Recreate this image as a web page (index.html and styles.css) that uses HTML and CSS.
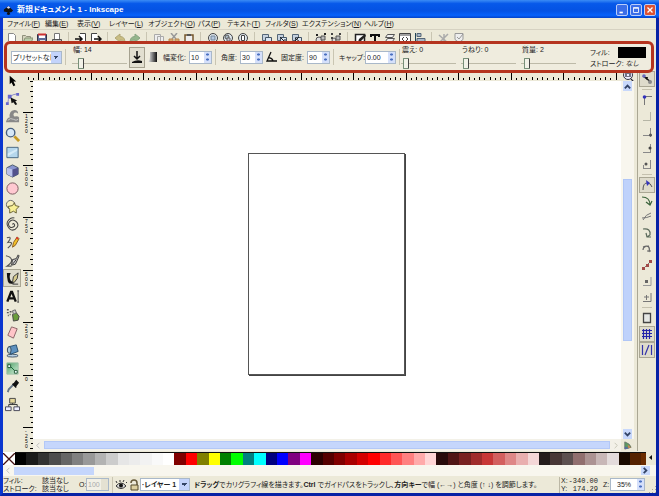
FILE: index.html
```html
<!DOCTYPE html>
<html lang="ja">
<head>
<meta charset="utf-8">
<title>新規ドキュメント 1 - Inkscape</title>
<link rel="stylesheet" href="styles.css">
</head>
<body>
<div class="window">
<header class="titlebar">
  <svg class="logo" viewBox="0 0 12 12"><path d="M6 1 11 6 9 8 7 8 8 10 6 11 4 10 5 8 1 7V5Z" fill="#111"/><path d="M6 1 8 3 6 4 4 3Z" fill="#dde"/></svg>
  <h1>新規ドキュメント 1 - Inkscape</h1>
  <div class="winbtns">
    <button aria-label="最小化"><svg viewBox="0 0 12 12"><path d="M3 9h4" stroke="#fff" stroke-width="2"/></svg></button>
    <button aria-label="最大化"><svg viewBox="0 0 12 12"><path d="M3 3h6v6H3zM3 4h6" fill="none" stroke="#fff"/></svg></button>
    <button class="close" aria-label="閉じる"><svg viewBox="0 0 12 12"><path d="M3 3l6 6M9 3l-6 6" stroke="#fff" stroke-width="1.6"/></svg></button>
  </div>
</header>
<nav class="menu">
  <a href="#">ファイル(<u>F</u>)</a><a href="#">編集(<u>E</u>)</a><a href="#">表示(<u>V</u>)</a><a href="#">レイヤー(<u>L</u>)</a><a href="#">オブジェクト(<u>O</u>)</a><a href="#">パス(<u>P</u>)</a><a href="#">テキスト(<u>T</u>)</a><a href="#">フィルタ(<u>S</u>)</a><a href="#">エクステンション(<u>N</u>)</a><a href="#">ヘルプ(<u>H</u>)</a>
</nav>
<div class="commands">
  <button aria-label="新規"><svg viewBox="0 0 12 12"><path d="M2.500 .5h5l2 2v9h-7z" fill="#fff" stroke="#888"/></svg></button>
  <button aria-label="開く"><svg viewBox="0 0 12 12"><path d="M1.500 10V2.500h3l1 1h4V10z" fill="#d5d3be" stroke="#8f907c"/><path d="M2 10l2-5h8l-2 5z" fill="#b9cba9" stroke="#899477"/></svg></button>
  <button aria-label="保存"><svg viewBox="0 0 12 12"><path d="M1.500 1.500h9v9h-9z" fill="#5d6c98" stroke="#334"/><path d="M3 2h6v3H3z" fill="#fff"/><path d="M2 1.500h8" stroke="#c33" stroke-width="2"/><path d="M4 7h5v4H4z" fill="#ddd"/></svg></button>
  <button aria-label="印刷"><svg viewBox="0 0 12 12"><path d="M3.500 6V.5h5V6" fill="#fff" stroke="#777"/><path d="M1.500 6.500h9v4h-9z" fill="#bbb" stroke="#555"/></svg></button>
  <i></i>
  <button aria-label="インポート"><svg viewBox="0 0 12 12"><path d="M5 .5h5.500v10H5" fill="#fff" stroke="#444"/><path d="M0 6h6M4 3l3 3-3 3" fill="none" stroke="#111" stroke-width="1.500"/></svg></button>
  <button aria-label="エクスポート"><svg viewBox="0 0 12 12"><path d="M7 .5H1.500v10H7" fill="#fff" stroke="#444"/><path d="M4 6h7M8 3l3 3-3 3" fill="none" stroke="#111" stroke-width="1.500"/></svg></button>
  <i></i>
  <button aria-label="元に戻す"><svg viewBox="0 0 12 12"><path d="M1 5l5-4v2.500q5 0 5 6-2-3-5-2.500V9z" fill="#c9bd83" stroke="#b1a775"/></svg></button>
  <button aria-label="やり直し"><svg viewBox="0 0 12 12"><path d="M11 5L6 1v2.500q-5 0-5 6 2-3 5-2.500V9z" fill="#94b68c" stroke="#89a583"/></svg></button>
  <i></i>
  <button aria-label="コピー"><svg viewBox="0 0 12 12"><path d="M1.500 1.500h6v8h-6zM4.500 3.500h6v8h-6z" fill="#eee" stroke="#aaa"/></svg></button>
  <button aria-label="切り取り"><svg viewBox="0 0 12 12"><path d="M3 0l5 6M9 0L4 6" stroke="#999" stroke-width="1.500"/><path d="M1 6h4v4H1zM7 6h4v4H7z" fill="#dba66a" stroke="#b58955"/></svg></button>
  <button aria-label="貼り付け"><svg viewBox="0 0 12 12"><path d="M2 2h8v10H2z" fill="#eee" stroke="#75572c" stroke-width="1.500"/><path d="M4 1h4v2H4z" fill="#555"/></svg></button>
  <i></i>
  <button aria-label="選択をズーム"><svg viewBox="0 0 12 12"><circle cx="6" cy="5" r="4.500" fill="#dfe8ee" stroke="#444"/><path d="M4 3h4v4H4z" fill="#b6c8df" stroke="#789"/><path d="M9 8l3 4" stroke="#444" stroke-width="2"/></svg></button>
  <button aria-label="描画をズーム"><svg viewBox="0 0 12 12"><circle cx="6" cy="5" r="4.500" fill="#dfe8ee" stroke="#444"/><circle cx="5" cy="4" r="2" fill="#a9b9c5" stroke="#555"/><path d="M5 5h3v3H5z" fill="#ccd" stroke="#666"/><path d="M9 8l3 4" stroke="#444" stroke-width="2"/></svg></button>
  <button aria-label="ページをズーム"><svg viewBox="0 0 12 12"><circle cx="6" cy="5" r="4.500" fill="#dfe8ee" stroke="#444"/><path d="M4.500 2.500h3v5h-3z" fill="#fff" stroke="#444"/><path d="M9 8l3 4" stroke="#444" stroke-width="2"/></svg></button>
  <i></i>
  <button aria-label="複製"><svg viewBox="0 0 12 12"><path d="M1.500 1.500h6v6h-6z" fill="#c6d2df" stroke="#567"/><path d="M4.500 4.500h6v6h-6z" fill="#d9e5f2" stroke="#456"/></svg></button>
  <button aria-label="クローン"><svg viewBox="0 0 12 12"><path d="M1.500 1.500h6v6h-6z" fill="#c6d2df" stroke="#567"/><path d="M4.500 4.500h6v6h-6z" fill="#d9e5f2" stroke="#456"/><path d="M4 4l5 5M9 6v3H6" fill="none" stroke="#222"/></svg></button>
  <button aria-label="クローン解除"><svg viewBox="0 0 12 12"><path d="M1.500 1.500h6v6h-6z" fill="#c6d2df" stroke="#567"/><path d="M4.500 4.500h6v6h-6z" fill="#d9e5f2" stroke="#456"/><path d="M4 8l4-4M4 5l5 4" stroke="#222"/></svg></button>
  <i></i>
  <button aria-label="グループ化"><svg viewBox="0 0 12 12"><circle cx="4" cy="7" r="3" fill="#ddd" stroke="#555"/><path d="M6 3h4v4H6z" fill="#bbb" stroke="#555"/><path d="M1 2h2M9 1h2M11 10h1" stroke="#222" stroke-width="2"/></svg></button>
  <button aria-label="グループ解除"><svg viewBox="0 0 12 12"><circle cx="4" cy="7" r="2" fill="#ddd" stroke="#555"/><path d="M6 3h4v4H6z" fill="#bbb" stroke="#555"/><path d="M1 1h2M9 1h2M1 5h2M10 9h2" stroke="#444" stroke-width="2"/></svg></button>
  <i></i>
  <button aria-label="フィル"><svg viewBox="0 0 12 12"><path d="M1.500 1.500h9v8h-9z" fill="#fff" stroke="#222" stroke-width="1.500"/><path d="M4 9l1-3 6-5 1 2-5 5z" fill="#222"/></svg></button>
  <button aria-label="テキスト"><svg viewBox="0 0 12 12"><path d="M2 4V2h8v2M6 2v8M4 10h4" fill="none" stroke="#111" stroke-width="2"/></svg></button>
  <button aria-label="レイヤー"><svg viewBox="0 0 12 12"><path d="M3.500 1.500h7l-2 3h-7zM3.500 5.500h7l-2 3h-7z" fill="#eee" stroke="#555"/></svg></button>
  <button aria-label="XML"><svg viewBox="0 0 12 12"><path d="M.5 .5h11v9H.5zM1 2h10" fill="#fff" stroke="#444"/><path d="M5 4L3 6 5 8M7 4l2 2L7 8" fill="none" stroke="#444"/></svg></button>
  <button aria-label="整列"><svg viewBox="0 0 12 12"><path d="M1.500 0v12" stroke="#245"/><path d="M3 .5h4v3H3zM3 5.500h8v3H3z" fill="#a8b8c8" stroke="#567"/></svg></button>
  <i></i>
  <button aria-label="設定"><svg viewBox="0 0 12 12"><path d="M1 2l9 8M10 1L2 9M6 1v9" stroke="#aaa" stroke-width="1.500"/></svg></button>
  <button aria-label="ドキュメント設定"><svg viewBox="0 0 12 12"><path d="M2 .5h8v6l-4 3-4-3z" fill="#eee" stroke="#999"/><path d="M4 4l2 2 4-5" fill="none" stroke="#999"/></svg></button>
</div>

<section class="toolctl">
  <select class="combo preset" aria-label="プリセット"><option>プリセットなし</option></select>
  <i class="sep"></i>
  <div class="slide first"><label for="w">幅: 14</label><input id="w" type="range" value="12"></div>
  <button class="pressed" aria-label="筆圧"><svg viewBox="0 0 12 16"><path d="M6 2v7M3 7l3 3 3-3" fill="none" stroke="#111" stroke-width="1.500"/><path d="M1 13q5-3 10-1v2H1z" fill="#111"/></svg></button>
  <button class="flat" aria-label="背景トレース"><svg viewBox="0 0 12 16"><defs><linearGradient id="tg"><stop stop-color="#eee"/><stop offset="1" stop-color="#111"/></linearGradient></defs><path d="M3 3h7v10H1q2-2 2-5z" fill="url(#tg)"/></svg></button>
  <label class="lab" for="s1">幅変化:</label>
  <span class="spin"><input id="s1" value="10"><b></b></span>
  <i class="sep"></i>
  <label class="lab short" for="s2">角度:</label>
  <span class="spin"><input id="s2" value="30"><b></b></span>
  <button class="flat" aria-label="傾き"><svg viewBox="0 0 12 16"><path d="M6 3L2 12h10M3 9q4-1 5 3" fill="none" stroke="#111" stroke-width="1.300"/></svg></button>
  <label class="lab" for="s3">固定度:</label>
  <span class="spin"><input id="s3" value="90"><b></b></span>
  <i class="sep"></i>
  <label class="lab" for="s4">キャップ:</label>
  <span class="spin wide"><input id="s4" value="0.00"><b></b></span>
  <i class="sep thin"></i>
  <div class="slide"><label for="r1">震え: 0</label><input id="r1" type="range" value="4"></div>
  <div class="slide"><label for="r2">うねり: 0</label><input id="r2" type="range" value="4"></div>
  <div class="slide"><label for="r3">質量: 2</label><input id="r3" type="range" value="6"></div>
  <div class="style"><span>フィル:</span><em></em><span>ストローク:</span><span class="none">なし</span></div>
</section>

<main class="work">
  <aside class="tools">
    <button aria-label="選択"><svg viewBox="0 0 16 16"><path d="M5 3v9l2-2 2 4 2-1-2-4h3z" fill="#000"/></svg></button>
    <button aria-label="ノード"><svg viewBox="0 0 16 16"><path d="M3 13Q3 4 13 3" fill="none" stroke="#8888c8"/><path d="M1 12h3v3H1zM12 2h3v3h-3zM3 4h4v4H3z" fill="#66c"/><path d="M6 7l7 3-2 1 2 3-2 1-2-3-2 1z" fill="#111"/></svg></button>
    <button aria-label="微調整"><svg viewBox="0 0 16 16"><path d="M1 14q1-5 4-5-1-7 5-8 4 0 4 4-2-2-4-1-2 2 0 4 4-1 5 1v5z" fill="#888"/><path d="M3 12q3-3 6-1t5 0" fill="none" stroke="#ccc"/></svg></button>
    <button aria-label="ズーム"><svg viewBox="0 0 16 16"><circle cx="6" cy="6" r="4.500" fill="#d6e8f7" stroke="#476080" stroke-width="1.500"/><path d="M10 10l5 5" stroke="#c69a22" stroke-width="3"/></svg></button>
    <button aria-label="矩形"><svg viewBox="0 0 16 16"><path d="M2 2.500h12v11H2z" fill="#b5d7ec" stroke="#456580"/><path d="M3 9l10-5v2L3 12z" fill="#d5ebf7"/></svg></button>
    <button aria-label="3Dボックス"><svg viewBox="0 0 16 16"><path d="M2 5l6-3 6 3v7l-6 3-6-3z" fill="#8995cf" stroke="#456"/><path d="M2 5l6 2v8l-6-3z" fill="#b9c2ea"/><path d="M8 7l6-2v7l-6 3z" fill="#52528c"/></svg></button>
    <button aria-label="円"><svg viewBox="0 0 16 16"><circle cx="8" cy="8" r="6" fill="#ffc9d1" stroke="#76565b"/></svg></button>
    <button aria-label="星形"><svg viewBox="0 0 16 16"><circle cx="6" cy="6" r="4.500" fill="#f8f0bd" stroke="#666"/><path d="M10 4l1 3 4 1-3 3v4l-3-2-4 2v-4L3 8l5-1z" fill="#f8f096" stroke="#665f32"/></svg></button>
    <button aria-label="らせん"><svg viewBox="0 0 16 16"><path d="M8 8q1-2 2 0t-2 3-4-2 2-5 6 1 1 6-5 3-5-4 1-7 6-2" fill="none" stroke="#444" stroke-width="1.100"/></svg></button>
    <button aria-label="鉛筆"><svg viewBox="0 0 16 16"><path d="M2 3q5-2 3 2L3 8q6-1 3 3l-3 3" fill="none" stroke="#555" stroke-width="1.200"/><path d="M8 13l1-5 4-6 2 2-4 7z" fill="#f1bf28" stroke="#875c1e"/><path d="M12 3l2 1" stroke="#d33" stroke-width="2"/></svg></button>
    <button aria-label="ペン"><svg viewBox="0 0 16 16"><path d="M1 3q5 1 6 4t-5 7h5" fill="none" stroke="#555" stroke-width="1.200"/><path d="M7 13l1-6 4-1 2-4 1 1-2 5-2 4z" fill="#ccc" stroke="#333"/><path d="M8 12l4-5" stroke="#333"/></svg></button>
    <button class="on" aria-label="カリグラフィ"><svg viewBox="0 0 16 16"><path d="M2 2h4q-2 4 0 8l4 3q-6 2-7-2t-1-9z" fill="#111"/><path d="M8 12l1-6 5-4-1 6-3 4z" fill="#d8cc8f" stroke="#333"/><path d="M8 14h6" stroke="#333"/></svg></button>
    <button aria-label="テキスト"><svg viewBox="0 0 16 16"><path d="M2.500 13.500L6.500 3h1l4 10.500M4 10h6" fill="none" stroke="#111" stroke-width="2.500"/><path d="M14 2v12M13 2h2M13 14h2" stroke="#444"/></svg></button>
    <button aria-label="スプレー"><svg viewBox="0 0 16 16"><path d="M8 8l4-2 3 4-1 4-5 1z" fill="#6a9d3c" stroke="#444"/><path d="M8 4l3-1 1 3-3 2z" fill="#ccc" stroke="#666"/><path d="M2 3h2M5 5h2M2 6h2M5 8h1M3 9h1" stroke="#555" stroke-width="1.500"/></svg></button>
    <button aria-label="消しゴム"><svg viewBox="0 0 16 16"><path d="M7 2l6 2-4 10-6-3z" fill="#ffc5c8" stroke="#876265"/></svg></button>
    <button aria-label="バケツ"><svg viewBox="0 0 16 16"><ellipse cx="8" cy="13.500" rx="6" ry="1.500" fill="#b9d2e6" stroke="#456"/><path d="M4 4l8-2 2 7-8 3z" fill="#5d91bf" stroke="#234b6c"/><ellipse cx="4.500" cy="7.500" rx="2" ry="3.500" fill="#acd" stroke="#345"/></svg></button>
    <button aria-label="グラデーション"><svg viewBox="0 0 16 16"><defs><linearGradient id="gg" x2="1" y2="1"><stop stop-color="#4c9d63"/><stop offset="1" stop-color="#d5f0dc"/></linearGradient></defs><path d="M2 2h12v12H2z" fill="url(#gg)" stroke="#9bbfa3"/><path d="M5 5l6 6" stroke="#163"/><path d="M3 4h3v3H3zM10 10h3v3h-3z" fill="#eff" stroke="#253"/></svg></button>
    <button aria-label="スポイト"><svg viewBox="0 0 16 16"><path d="M3 14l1-3 6-6" fill="none" stroke="#678" stroke-width="2"/><path d="M8 5l4 4M9 6l3-4 2 2-3 4z" fill="#111" stroke="#111" stroke-width="1.500"/></svg></button>
    <button aria-label="コネクタ"><svg viewBox="0 0 16 16"><path d="M4 11V8h9v3M8 5v3" fill="none" stroke="#333"/><path d="M5 1.500h6v5H5z" fill="#e5d79b" stroke="#444"/><path d="M.5 10.500h6v4h-6zM9.500 10.500h6v4h-6z" fill="#eef" stroke="#445"/></svg></button>
  </aside>
  <div class="doc">
    <svg class="rtop" id="rtop"></svg>
    <button class="corner" aria-label="ズーム固定"><svg viewBox="0 0 12 12"><circle cx="6" cy="5" r="4.500" fill="#eef" stroke="#334"/><path d="M4 3v4M6 3v1M6 6v1M8 3v4M9 9l3 3" stroke="#223" stroke-width="1.200"/></svg></button>
    <svg class="rleft" id="rleft"></svg>
    <div class="canvas"><div class="page"></div></div>
    <div class="vscroll"><button aria-label="上へ"><svg viewBox="0 0 10 10"><path d="M2 7l3-3 3 3" fill="none" stroke="#346" stroke-width="2"/></svg></button><span><b></b></span><button aria-label="下へ"><svg viewBox="0 0 10 10"><path d="M2 3l3 3 3-3" fill="none" stroke="#346" stroke-width="2"/></svg></button></div>
    <div class="hscroll"><button aria-label="左へ"><svg viewBox="0 0 10 10"><path d="M6 2L3 5l3 3" fill="none" stroke="#bbb"/></svg></button><b></b><button aria-label="右へ"><svg viewBox="0 0 10 10"><path d="M4 2l3 3-3 3" fill="none" stroke="#c4c4b4"/></svg></button></div>
    <button class="cms" aria-label="カラー管理"><svg viewBox="0 0 10 10"><path d="M2 1q6 2 7 6L2 9z" fill="#5a9a62" stroke="#676"/><path d="M2 6l5 2-5 1z" fill="#56a"/><path d="M5 4l4 3-3 1z" fill="#cc8855"/></svg></button>
  </div>
  <aside class="snap">
    <button class="on" aria-label="スナップ"><svg viewBox="0 0 12 12"><path d="M2 3l8 6" stroke="#111" stroke-width="1.500"/><circle cx="3" cy="3" r="1.800" fill="#66b"/><circle cx="9" cy="9" r="2" fill="#888"/><path d="M4 4l3 0-1 3z" fill="#111"/></svg></button>
    <i></i>
    <button aria-label="境界枠"><svg viewBox="0 0 12 12"><path d="M3.500 11V3M3 2.500h8" fill="none" stroke="#777"/><circle cx="3.500" cy="3" r="1.800" fill="#33b"/></svg></button>
    <button aria-label="境界枠の辺"><svg viewBox="0 0 12 12"><path d="M2 10.500h7.500V2" fill="none" stroke="#b5b5a5"/></svg></button>
    <button aria-label="境界枠の角"><svg viewBox="0 0 12 12"><path d="M2 9.500h9M9.500 2v9" fill="none" stroke="#888"/><circle cx="9.500" cy="9" r="1.500" fill="#555"/></svg></button>
    <button aria-label="辺の中点"><svg viewBox="0 0 12 12"><path d="M2 10.500h8M9.500 2v9" fill="none" stroke="#888"/><circle cx="9" cy="6" r="1.500" fill="#444"/></svg></button>
    <button aria-label="枠の中心"><svg viewBox="0 0 12 12"><path d="M2 10.500h8M9.500 2v9M2.500 7v3" fill="none" stroke="#888"/><circle cx="5" cy="6" r="1.500" fill="#555"/></svg></button>
    <i></i>
    <button class="on" aria-label="ノードにスナップ"><svg viewBox="0 0 12 12"><path d="M2 11q0-7 4-7t5 4" fill="none" stroke="#555"/><path d="M5 1l4 3-3 3z" fill="#33b"/></svg></button>
    <button aria-label="パス"><svg viewBox="0 0 12 12"><path d="M1 2q8 0 8 8M5 7l4 3 2-4" fill="none" stroke="#3b633b" stroke-width="1.200"/></svg></button>
    <button aria-label="交差"><svg viewBox="0 0 12 12"><path d="M2 9q3-6 8-7M1 7q5 0 9-2" fill="none" stroke="#777"/></svg></button>
    <button aria-label="シャープ"><svg viewBox="0 0 12 12"><path d="M2 2q8-1 7 6L6 10M5 6l1 4 4 0" fill="none" stroke="#5b6a5b" stroke-width="1.200"/></svg></button>
    <button aria-label="スムーズ"><svg viewBox="0 0 12 12"><path d="M2 4q8-3 6 5M2 7q0-4 6-4M6 8h4" fill="none" stroke="#666" stroke-width="1.200"/></svg></button>
    <button aria-label="線分の中点"><svg viewBox="0 0 12 12"><path d="M2 10l8-8" stroke="#777"/><path d="M1 8h3v3H1zM5 5h3v3H5zM8 1h3v3H8z" fill="#a34b48"/></svg></button>
    <button aria-label="オブジェクト中心"><svg viewBox="0 0 12 12"><path d="M2 10.500h8V2" fill="none" stroke="#999"/><path d="M4 5h3v3H4z" fill="#666"/></svg></button>
    <button aria-label="回転中心"><svg viewBox="0 0 12 12"><path d="M2 10.500h8V2M3 6h5M5.500 4v5" fill="none" stroke="#777"/></svg></button>
    <i></i>
    <button aria-label="ページ枠"><svg viewBox="0 0 12 12"><path d="M2.500 1.500h7v9h-7z" fill="#e5e7e4" stroke="#444" stroke-width="1.300"/></svg></button>
    <button class="on" aria-label="グリッド"><svg viewBox="0 0 12 12"><path d="M1 2.500h10M1 5.500h10M1 8.500h10M2.500 1v10M5.500 1v10M8.500 1v10" stroke="#22a" stroke-width="1.200"/></svg></button>
    <button class="on" aria-label="ガイド"><svg viewBox="0 0 12 12"><path d="M1.500 1v10M10.500 1v10M4 11L8 1" stroke="#33a" stroke-width="1.200"/></svg></button>
  </aside>
</main>

<div class="palette"><button class="nofill" aria-label="なし"><svg viewBox="0 0 12 12"><path d="M0 0l12 12M12 0L0 12" stroke="#411" stroke-width="1.300"/></svg></button><div class="swatches" id="swatches"></div><button class="more" aria-label="パレット"><svg viewBox="0 0 10 12"><path d="M6 2v5L3 4.500z" fill="#111"/></svg></button></div>
<div class="palscroll"><button aria-label="左へ"><svg viewBox="0 0 10 10"><path d="M6 2L3 5l3 3" fill="none" stroke="#bbb"/></svg></button><b></b><button class="right" aria-label="右へ"><svg viewBox="0 0 10 10"><path d="M3 2l3 3-3 3" fill="none" stroke="#346" stroke-width="2"/></svg></button></div>

<footer class="status">
  <div class="fs"><span>フィル:</span><span>該当なし</span><span>ストローク:</span><span>該当なし</span></div>
  <label class="op" for="op">O:</label><span class="spin off"><input id="op" value="100" disabled><b></b></span>
  <i class="sep thin"></i>
  <button class="eye" aria-label="表示"><svg viewBox="0 0 12 12"><path d="M1 7q5-6 10 0-5 5-10 0z" fill="#ddd" stroke="#333"/><circle cx="6" cy="6.500" r="2" fill="#111"/><path d="M2 4L1 2M5 3V1M8 3l1-2M11 4l1-1" stroke="#333"/></svg></button>
  <button class="eye" aria-label="ロック"><svg viewBox="0 0 12 12"><path d="M3 4q0-3 3-3t3 3v3" fill="none" stroke="#665a3b" stroke-width="1.500"/><path d="M3 6h7v5H3z" fill="#ddd0a0" stroke="#544a2c"/></svg></button>
  <select class="combo layer" aria-label="レイヤー"><option>·レイヤー 1</option></select>
  <p><strong>ドラッグ</strong>でカリグラフィ線を描きます。<strong>Ctrl</strong> でガイドパスをトラックし、<strong>方向キー</strong>で幅 (←→) と角度 (↑ ↓) を調節します。</p>
  <div class="xy"><span>X:</span><span>-340.00</span><span>Y:</span><span>174.29</span></div>
  <label class="zl" for="z">Z:</label><span class="spin zoom"><input id="z" value="35%"><b></b></span>
  <span class="grip"></span>
</footer>
</div>
<script src="app.js"></script>
</body>
</html>
```
FILE: app.js
```js
// Swatches, in the order of the Inkscape default palette.
const colors = ('000000 1a1a1a 333333 4d4d4d 666666 808080 999999 b3b3b3 cccccc e6e6e6 ececec f2f2f2 f9f9f9 ffffff ' +
  '800000 ff0000 808000 ffff00 008000 00ff00 008080 00ffff 000080 0000ff 800080 ff00ff ' +
  '2b0000 550000 800000 aa0000 d40000 ff0000 ff2a2a ff5555 ff8080 ffaaaa ffd5d5 ' +
  '280b0b 501616 782121 a02c2c c83737 d35f5f de8787 e9afaf f4d7d7 ' +
  '241c1c 483737 5d5050 916f6f ac9393 c8b7b7 e3dbdb 1a0b00 552200 6b2c00').split(' ');
const box = document.getElementById('swatches');
colors.forEach(c => {
  const s = document.createElement('span');
  s.style.background = '#' + c;
  box.append(s);
});

// Rulers: ten small divisions to each labelled one.
const NS = 'http://www.w3.org/2000/svg';
const STEP = 52.5;
function add(svg, name, attrs, text) {
  const e = document.createElementNS(NS, name);
  for (const k in attrs) e.setAttribute(k, attrs[k]);
  if (text) e.textContent = text;
  svg.append(e);
}
function ruler(svg, origin, vertical, labels) {
  const size = svg.getBoundingClientRect();
  const len = vertical ? size.height : size.width;
  const depth = vertical ? size.width : size.height;
  for (let i = -60; i < 200; i++) {
    const p = Math.round(origin + i * STEP / 10);
    if (p < 0 || p > len) continue;
    const t = i % 10 === 0 ? depth : i % 2 === 0 ? 3 : 2;
    add(svg, 'rect', vertical
      ? { x: depth - t, y: p, width: t, height: 1 }
      : { x: p, y: depth - t - 1, width: 1, height: t });
  }
  labels.forEach((s, n) => [...s].forEach((ch, k) =>
    add(svg, 'text', { x: 2, y: origin + n * STEP + 6 + k * 5 }, ch)));
}
ruler(document.getElementById('rtop'), 15, false, []);
ruler(document.getElementById('rleft'), 31, true, ['1250', '1000', '750', '500', '250', '0', '-250']);
```
FILE: styles.css
```css
* { box-sizing: border-box; }
body { margin: 0; background: #0b3fd6; color: #222; font: 7px/9px "Liberation Sans", "Noto Sans CJK JP", sans-serif; font-feature-settings: "palt"; }
button, input, select { font: inherit; color: inherit; margin: 0; padding: 0; border: 0; background: none; border-radius: 0; font-feature-settings: inherit; }
button { display: flex; align-items: center; justify-content: center; flex: none; }
svg { display: block; }
.window { display: flex; flex-direction: column; height: 100vh; background: #ece9d8; border: 3px solid #0a36cf; border-top: 0; border-right-color: #0722a5; border-bottom-color: #0722a5; white-space: nowrap; }
.titlebar { display: flex; align-items: center; gap: 3px; height: 18px; flex: none; margin: 0 -3px; padding: 2px 3px 0; background: linear-gradient(#3b8cf5, #0759ea 20%, #0452e3 60%, #0661fb 85%, #0342c8); }
.logo { width: 11px; height: 11px; }
h1 { flex: 1; margin: 0; color: #fff; font-size: 8px; line-height: 12px; font-weight: bold; }
.winbtns { display: flex; gap: 2px; }
.winbtns button { width: 12px; height: 12px; border: 1px solid #b9cdfa; border-radius: 2px; background: #3b6ee8; }
.winbtns .close { background: #dc5232; }
.winbtns svg { width: 10px; height: 10px; }
.menu { display: grid; grid-template-columns: 38px 32px 32px 39px 50px 29px 38px 37px 62px 1fr; height: 12px; flex: none; align-items: center; padding-left: 4px; border-bottom: 1px solid #d6d2c2; }
.menu a { color: #222; text-decoration: none; }
.commands { display: flex; height: 11px; flex: none; overflow: hidden; padding: 2px 0 0 1px; }
.commands button { width: 15px; height: 13px; }
.commands svg { width: 12px; height: 12px; }
.commands i { width: 9px; flex: none; height: 12px; background: linear-gradient(#c9c5b2, #c9c5b2) 4px 0 / 1px 12px no-repeat; }
.toolctl { display: flex; align-items: center; height: 32px; flex: none; margin: 0 2px 0 1px; padding-left: 4px; border: 3px solid #b5341f; border-radius: 6px; background: #efecde; position: relative; z-index: 1; }
.combo { appearance: none; height: 13px; padding: 0 10px 0 1px; border: 1px solid #a9b8c9; color: #222; background: linear-gradient(45deg, transparent 50%, #346 50%) right 5px top 4px / 3px 3px no-repeat, linear-gradient(-45deg, transparent 50%, #346 50%) right 2px top 4px / 3px 3px no-repeat, linear-gradient(#c3d3fb, #c3d3fb) right / 10px 100% no-repeat, #fff; }
.combo { background: linear-gradient(-135deg, #346 50%, transparent 50%) right 5px top 4px / 3px 3px no-repeat, linear-gradient(135deg, #346 50%, transparent 50%) right 2px top 4px / 3px 3px no-repeat, linear-gradient(#c3d3fb, #c3d3fb) right / 10px 100% no-repeat, #fff; }
.preset { width: 51px; }
.layer { width: 50px; font-weight: bold; }
.sep { flex: none; width: 7px; height: 16px; background: linear-gradient(#c9c5b2, #c9c5b2) 3px 0 / 1px 16px no-repeat; }
.sep.thin { width: 5px; }
.slide { display: flex; flex-direction: column; justify-content: space-between; width: 60px; flex: none; height: 25px; }
.slide.first { width: 57px; margin-left: 3px; }
.slide label { line-height: 9px; padding-left: 1px; }
input[type=range] { appearance: none; width: 55px; height: 13px; background: linear-gradient(#bdbaa8, #bdbaa8) 0 6px / 100% 1px no-repeat; }
input[type=range]::-webkit-slider-thumb { appearance: none; width: 6px; height: 11px; border: 1px solid #778f78; border-right-color: #444; border-radius: 1px; background: #f2f1e8; }
.pressed { width: 16px; height: 21px; border: 1px solid #a5a18f; background: #e2dfd0; }
.toolctl svg { width: 12px; height: 16px; }
.flat { width: 16px; }
.lab { width: 28px; flex: none; padding-left: 2px; }
.lab.short { width: 21px; }
.spin { display: flex; flex: none; width: 23px; height: 13px; border: 1px solid #a9b8c9; background: #fff; }
.spin input { flex: 1; min-width: 0; padding-left: 1px; }
.spin b { width: 7px; background: radial-gradient(#4a6fc0 1px, transparent 2px) 0 0 / 7px 5px, #d5e0fb; }
.spin.wide { width: 31px; }
.spin.off { color: #aaa; background: #f2f0e6; }
.spin.off b { background: #e4e1d2; }
.spin.zoom { width: 35px; }
.zoom input { padding-left: 6px; }
.style { display: grid; grid-template-columns: 28px 28px; grid-template-rows: 12px 10px; align-items: center; margin: 0 5px 0 auto; }
.style em { height: 11px; background: #000; }
.none { text-align: center; font-style: italic; }
.work { display: flex; flex: 1; min-height: 0; margin-top: -2px; }
.tools { width: 20px; flex: none; }
.tools button { width: 18px; height: 18px; }
.tools svg { width: 15px; height: 15px; }
.tools .on, .snap .on { border: 1px solid #aaa794; background: #dedbcb; }
.doc { flex: 1; min-width: 0; display: grid; grid-template-columns: 10px 1fr 13px; grid-template-rows: 10px 1fr 12px; margin-right: 3px; }
.rtop { grid-column: 1 / 3; width: 100%; height: 10px; }
.rleft { width: 10px; height: 100%; font-size: 5px; grid-row: 2 / 4; }
.corner svg { width: 12px; height: 12px; }
.canvas { position: relative; background: #fff; overflow: hidden; }
.page { position: absolute; left: 215px; top: 72px; width: 157px; height: 222px; border: 1px solid #555; box-shadow: 1px 1px #444; background: #fff; }
.vscroll { display: flex; flex-direction: column; align-items: center; background: #f8f6ee; }
.vscroll button { width: 9px; height: 10px; background: #c8d8fb; }
.vscroll svg, .hscroll svg, .palscroll svg, .cms svg { width: 9px; height: 9px; }
.vscroll span { flex: 1; display: flex; flex-direction: column; }
.vscroll b { width: 9px; height: 48%; margin: 88px 0 0; background: #bfd2fb; border: 1px solid #b0c6f6; }
.hscroll { display: flex; align-items: center; background: #f3f1e8; }
.hscroll b { flex: 1; height: 8px; background: #c5d6fc; border: 1px solid #b3c8f7; }
.hscroll button { width: 11px; }
.snap { width: 19px; flex: none; border-left: 1px solid #aaa794; }
.snap button { width: 16px; height: 16px; margin-left: 1px; }
.snap svg { width: 12px; height: 12px; }
.snap i { display: block; height: 5px; margin: 0 4px; background: linear-gradient(#c5c1ae, #c5c1ae) 0 2px / 100% 1px no-repeat; }
.palette { display: flex; flex: none; height: 13px; margin-top: 1px; }
.nofill { width: 12px; background: #fff; }
.nofill svg { width: 12px; height: 12px; }
.swatches { flex: 1; display: flex; border-top: 1px solid #111; }
.swatches span { flex: 5; }
.swatches span:last-child { flex: 2; }
.more { width: 10px; }
.more svg { width: 10px; height: 12px; }
.palscroll { display: flex; align-items: center; flex: none; height: 11px; background: #f8f6ee; }
.palscroll button { width: 11px; }
.palscroll b { width: 80px; height: 8px; background: #c5d6fc; }
.palscroll .right { margin: 0 6px 0 auto; width: 9px; background: #c8d8fb; }
.status { display: flex; align-items: center; height: 17px; flex: none; }
.fs { display: grid; grid-template-columns: 39px 37px; line-height: 8px; }
.op { width: 7px; }
.eye { width: 13px; }
.eye svg { width: 12px; height: 12px; }
.status p { margin: 0 0 0 4px; flex: 1; min-width: 0; overflow: hidden; }
.xy { display: grid; grid-template-columns: 7px 30px; line-height: 8px; border-left: 1px solid #bbb7a5; padding-left: 1px; margin-right: 5px; }
.xy span:nth-child(even) { text-align: right; font-family: "Liberation Mono", monospace; }
.zl { width: 7px; }
.grip { width: 8px; height: 8px; margin-left: 3px; align-self: flex-end; background: radial-gradient(#a9a693 1px, transparent 1px) 0 0 / 3px 3px; clip-path: polygon(100% 0, 100% 100%, 0 100%); }
```
